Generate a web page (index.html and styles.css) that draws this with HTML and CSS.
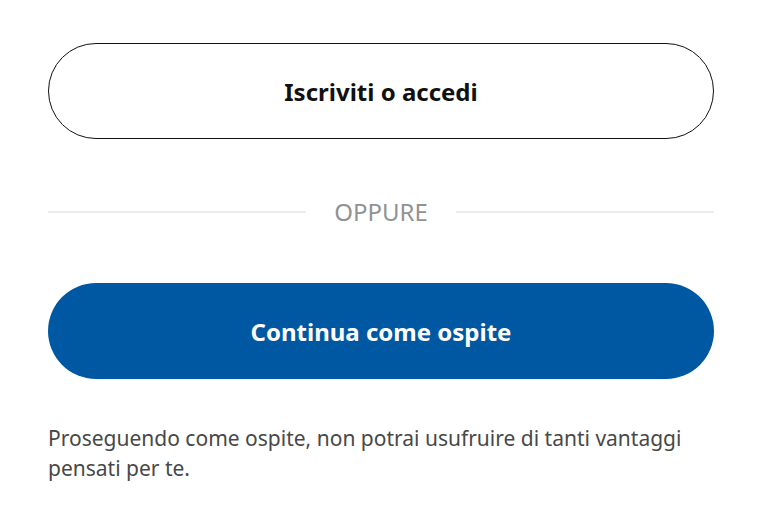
FILE: index.html
```html
<!DOCTYPE html>
<html lang="it">
<head>
<meta charset="utf-8">
<link rel="stylesheet" href="styles.css">
</head>
<body>
<main class="panel">
  <button class="btn btn-outline">Iscriviti o accedi</button>
  <div class="divider"><span class="divider-line"></span><span class="divider-text">OPPURE</span><span class="divider-line"></span></div>
  <button class="btn btn-primary">Continua come ospite</button>
  <p class="note">Proseguendo come ospite, non potrai usufruire di tanti vantaggi pensati per te.</p>
</main>
</body>
</html>
```
FILE: styles.css
```css
html, body {
  margin: 0;
  padding: 0;
  background: #ffffff;
}
body {
  font-family: "Noto Sans", "Open Sans", sans-serif;
  color: #111111;
}
.panel {
  width: 666px;
  padding: 43px 0 0 48px;
  display: flex;
  flex-direction: column;
}
.btn {
  height: 96px;
  border-radius: 48px;
  font-family: "Noto Sans", sans-serif;
  font-weight: 700;
  font-size: 24px;
  display: flex;
  align-items: center;
  justify-content: center;
  cursor: pointer;
  width: 100%;
  padding: 0;
}
.btn-outline {
  background: #ffffff;
  border: 1.5px solid #111111;
  color: #111111;
}
.btn-primary {
  background: #0058a3;
  border: none;
  color: #ffffff;
  margin-top: 56px;
}
.divider {
  margin-top: 58px;
  height: 30px;
  display: flex;
  align-items: center;
  gap: 28px;
}
.divider-line {
  flex: 1;
  height: 2px;
  background: #ececec;
}
.divider-text {
  font-size: 24px;
  line-height: 30px;
  color: #929292;
}
.note {
  margin: 44px 0 0;
  font-size: 21px;
  line-height: 30px;
  color: #484848;
}
```
